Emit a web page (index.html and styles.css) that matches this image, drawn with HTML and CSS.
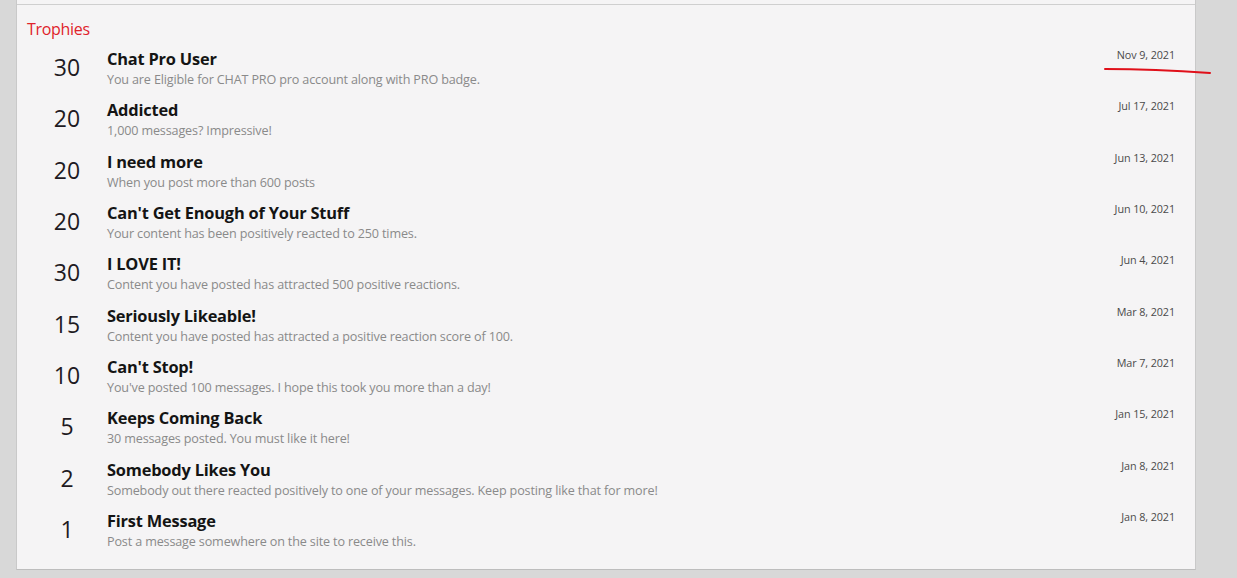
FILE: index.html
```html
<!DOCTYPE html>
<html>
<head>
<meta charset="utf-8">
<link rel="stylesheet" href="styles.css">
</head>
<body>
<div class="panel">
  <div class="topline"></div>
  <h2 class="heading">Trophies</h2>
  <ol class="list">
    <li class="row"><div class="pts">30</div><div class="main"><div class="title">Chat Pro User</div><div class="desc">You are Eligible for CHAT PRO pro account along with PRO badge.</div></div><div class="date">Nov 9, 2021</div></li>
    <li class="row"><div class="pts">20</div><div class="main"><div class="title">Addicted</div><div class="desc">1,000 messages? Impressive!</div></div><div class="date">Jul 17, 2021</div></li>
    <li class="row"><div class="pts">20</div><div class="main"><div class="title">I need more</div><div class="desc">When you post more than 600 posts</div></div><div class="date">Jun 13, 2021</div></li>
    <li class="row"><div class="pts">20</div><div class="main"><div class="title">Can't Get Enough of Your Stuff</div><div class="desc">Your content has been positively reacted to 250 times.</div></div><div class="date">Jun 10, 2021</div></li>
    <li class="row"><div class="pts">30</div><div class="main"><div class="title">I LOVE IT!</div><div class="desc">Content you have posted has attracted 500 positive reactions.</div></div><div class="date">Jun 4, 2021</div></li>
    <li class="row"><div class="pts">15</div><div class="main"><div class="title">Seriously Likeable!</div><div class="desc">Content you have posted has attracted a positive reaction score of 100.</div></div><div class="date">Mar 8, 2021</div></li>
    <li class="row"><div class="pts">10</div><div class="main"><div class="title">Can't Stop!</div><div class="desc">You've posted 100 messages. I hope this took you more than a day!</div></div><div class="date">Mar 7, 2021</div></li>
    <li class="row"><div class="pts">5</div><div class="main"><div class="title">Keeps Coming Back</div><div class="desc">30 messages posted. You must like it here!</div></div><div class="date">Jan 15, 2021</div></li>
    <li class="row"><div class="pts">2</div><div class="main"><div class="title">Somebody Likes You</div><div class="desc">Somebody out there reacted positively to one of your messages. Keep posting like that for more!</div></div><div class="date">Jan 8, 2021</div></li>
    <li class="row"><div class="pts">1</div><div class="main"><div class="title">First Message</div><div class="desc">Post a message somewhere on the site to receive this.</div></div><div class="date">Jan 8, 2021</div></li>
  </ol>
</div>
<svg class="scribble" width="120" height="12" viewBox="0 0 120 12"><path d="M3 3 C 40 3, 80 5, 108 7" stroke="#e0101a" stroke-width="2" fill="none" stroke-linecap="round"/></svg>
</body>
</html>
```
FILE: styles.css
```css
html, body {
  margin: 0;
  padding: 0;
  background: #d8d8d8;
  height: 578px;
  overflow: hidden;
}
body {
  font-family: "Open Sans", "Noto Sans", sans-serif;
  position: relative;
}
.panel {
  margin-left: 16px;
  width: 1180px;
  height: 570px;
  background: #f5f4f5;
  border-left: 1px solid #c9c9c9;
  border-right: 1px solid #c9c9c9;
  border-bottom: 1px solid #bdbdbd;
  box-sizing: border-box;
}
.topline {
  height: 4px;
  border-bottom: 1px solid #cfcfcf;
}
.heading {
  margin: 0;
  padding: 14px 0 0 10px;
  height: 26px;
  font-weight: normal;
  font-size: 16px;
  line-height: 20px;
  color: #e0232b;
  letter-spacing: -0.3px;
}
.list {
  list-style: none;
  margin: 0;
  padding: 0;
}
.row {
  display: flex;
  align-items: flex-start;
  height: 51.35px;
}
.pts {
  width: 100px;
  text-align: center;
  font-size: 23px;
  line-height: 28px;
  padding-top: 8px;
  color: #1e1a22;
  margin-left: 0;
}
.main {
  flex: 1;
  margin-left: -10px;
  padding-top: 2px;
}
.title {
  font-weight: bold;
  font-size: 16.4px;
  line-height: 24px;
  color: #141414;
  letter-spacing: -0.2px;
}
.desc {
  font-size: 12.6px;
  line-height: 17px;
  color: #8a8a8a;
  letter-spacing: -0.15px;
}
.date {
  font-size: 10.8px;
  line-height: 14px;
  color: #4a4a4a;
  padding-top: 3px;
  padding-right: 20px;
  letter-spacing: -0.1px;
}
.scribble {
  position: absolute;
  left: 1102px;
  top: 66px;
}
```
